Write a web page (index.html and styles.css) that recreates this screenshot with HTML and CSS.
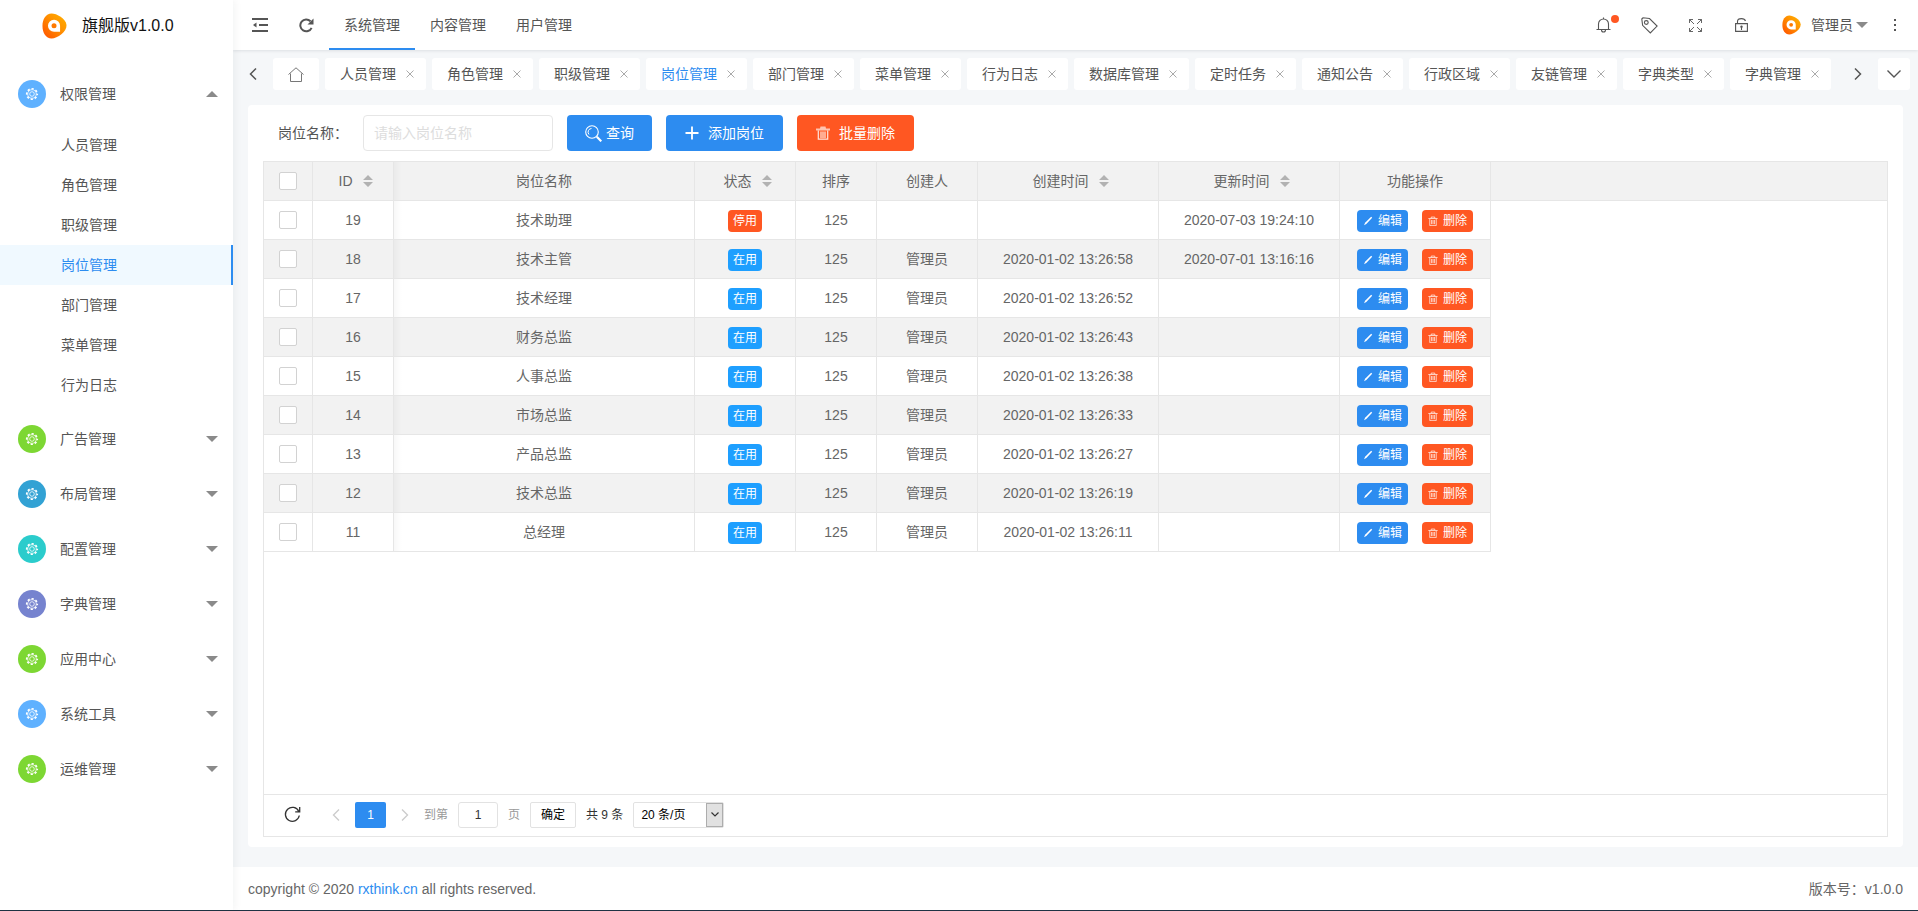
FILE: index.html
```
<!DOCTYPE html>
<html lang="zh-CN">
<head>
<meta charset="utf-8">
<title>岗位管理 - 旗舰版v1.0.0</title>
<link rel="stylesheet" href="styles.css">
</head>
<body>
<svg class="sprite" aria-hidden="true">
  <defs>
    <linearGradient id="flame" x1="0" y1="1" x2="1" y2="0">
      <stop offset="0.1" stop-color="#ff5a00"/>
      <stop offset="0.6" stop-color="#ff9500"/>
      <stop offset="1" stop-color="#ffb400"/>
    </linearGradient>
    <symbol id="logo" viewBox="0 0 26 26">
      <path fill="url(#flame)" d="M10 0C15 0 25 5 25.500 12C26 19 16 26 10 26C4 26 0.500 20 0.500 13C0.500 6 4 0 10 0Z"/>
      <path fill="#fff" d="M12.500 6.500a6.300 6.300 0 1 0 0 12.600h6.300v-6.300A6.300 6.300 0 0 0 12.500 6.500Z"/>
      <circle cx="12.500" cy="12.800" r="2.600" fill="#ff7a00"/>
    </symbol>
    <symbol id="gear" viewBox="-7 -7 14 14">
      <circle r="5.300" fill="none" stroke="currentColor" stroke-width="1.600" stroke-dasharray="2.200 1.963" stroke-dashoffset="1.100"/>
      <circle r="4.300" fill="none" stroke="currentColor" stroke-width=".8"/>
      <circle r="2.300" fill="none" stroke="currentColor" stroke-width=".8"/>
    </symbol>
    <symbol id="down" viewBox="0 0 12 6"><path fill="currentColor" d="M0 0h12L6 6z"/></symbol>
    <symbol id="close" viewBox="0 0 8 8"><path fill="none" stroke="currentColor" d="M.5.500l7 7M7.500.500l-7 7"/></symbol>
    <symbol id="sort" viewBox="0 0 10 12"><path fill="currentColor" d="M0 5L5 0l5 5zM0 7h10l-5 5z"/></symbol>
    <symbol id="trash" viewBox="0 0 14 14">
      <path fill="none" stroke="currentColor" d="M.5 3.500h13M4.500 3V1.500h5V3M2.500 4v9.500h9V4M5 5.500v6M7 5.500v6M9 5.500v6"/>
    </symbol>
    <symbol id="trash-solid" viewBox="0 0 14 14">
      <path fill="currentColor" opacity=".65" d="M0 2.500h4L4.500.500h5l.5 2h4v2H0z"/>
      <path fill="none" stroke="currentColor" stroke-width="1.200" opacity=".85" d="M2.300 4.500v8.700h9.400V4.500M5 5.500v6.500M7 5.500v6.500M9 5.500v6.500"/>
    </symbol>
    <symbol id="pen" viewBox="0 0 12 12"><path fill="currentColor" d="M9.800 1l1.200 1.200-7 7.500L1.200 11l1.300-2.800z"/></symbol>
  </defs>
</svg>
<div class="app">
  <aside class="sidebar">
    <div class="brand"><svg class="brand-logo"><use href="#logo"/></svg><span>旗舰版v1.0.0</span></div>
    <nav class="menu">
      <a class="group" href="#"><span class="badge sky"><svg><use href="#gear"/></svg></span>权限管理<svg class="caret up"><use href="#down"/></svg></a>
      <div class="submenu">
        <a href="#">人员管理</a>
        <a href="#">角色管理</a>
        <a href="#">职级管理</a>
        <a href="#" class="active">岗位管理</a>
        <a href="#">部门管理</a>
        <a href="#">菜单管理</a>
        <a href="#">行为日志</a>
      </div>
      <a class="group" href="#"><span class="badge green"><svg><use href="#gear"/></svg></span>广告管理<svg class="caret"><use href="#down"/></svg></a>
      <a class="group" href="#"><span class="badge blue"><svg><use href="#gear"/></svg></span>布局管理<svg class="caret"><use href="#down"/></svg></a>
      <a class="group" href="#"><span class="badge teal"><svg><use href="#gear"/></svg></span>配置管理<svg class="caret"><use href="#down"/></svg></a>
      <a class="group" href="#"><span class="badge violet"><svg><use href="#gear"/></svg></span>字典管理<svg class="caret"><use href="#down"/></svg></a>
      <a class="group" href="#"><span class="badge green"><svg><use href="#gear"/></svg></span>应用中心<svg class="caret"><use href="#down"/></svg></a>
      <a class="group" href="#"><span class="badge sky"><svg><use href="#gear"/></svg></span>系统工具<svg class="caret"><use href="#down"/></svg></a>
      <a class="group" href="#"><span class="badge green"><svg><use href="#gear"/></svg></span>运维管理<svg class="caret"><use href="#down"/></svg></a>
    </nav>
  </aside>

  <div class="main">
    <header class="topbar">
      <button class="tool" type="button" aria-label="收起菜单"><svg width="16" height="14" viewBox="0 0 16 14"><path fill="none" stroke="currentColor" stroke-width="2" d="M0 1h16M7 7h9M0 13h16"/><path fill="currentColor" d="M1 7l3.500-2.500v5z"/></svg></button>
      <button class="tool" type="button" aria-label="刷新"><svg width="15" height="15" viewBox="0 0 15 15"><path fill="none" stroke="currentColor" stroke-width="2" d="M12.600 9.800A5.900 5.900 0 1 1 11.500 3.300"/><path fill="currentColor" d="M14.500.500v6h-6z"/></svg></button>
      <nav class="modules">
        <a href="#" class="active">系统管理</a>
        <a href="#">内容管理</a>
        <a href="#">用户管理</a>
      </nav>
      <div class="actions">
        <button class="tool" type="button" aria-label="消息"><span class="bell"><svg width="15" height="16" viewBox="0 0 15 16"><path fill="none" stroke="currentColor" stroke-width="1.100" d="M.5 12.500h14M2.500 12.500V7a5 5 0 0 1 10 0v5.500M7.500 2V.5M5.500 13a2 2 0 0 0 4 0"/></svg><i class="dot"></i></span></button>
        <button class="tool" type="button" aria-label="标签"><svg width="17" height="17" viewBox="0 0 17 17"><path fill="none" stroke="currentColor" stroke-width="1.100" d="M.8 2L2 .8l6.500.7 7.600 7.600-6.800 6.800L1.600 8.300z"/><circle cx="5.300" cy="5.500" r="1.900" fill="none" stroke="currentColor" stroke-width="1.100"/></svg></button>
        <button class="tool" type="button" aria-label="全屏"><svg width="13" height="13" viewBox="0 0 13 13"><path fill="none" stroke="currentColor" stroke-width=".9" d="M.5 4V.5H4M.5.500L5 5M9 .5h3.500V4M12.500.500L8 5M.5 9v3.500H4M.5 12.500L5 8M9 12.500h3.500V9M12.500 12.500L8 8"/></svg></button>
        <button class="tool" type="button" aria-label="锁屏"><svg width="13" height="14" viewBox="0 0 13 14"><path fill="none" stroke="currentColor" stroke-width="1.100" d="M.6 5.600h11.800v7.800H.6zM2.500 5.500V3.500C2.500 1.500 4 .6 6.500.6S10 1.500 10.500 3M6.500 9.500V12"/><circle cx="6.500" cy="8.800" r="1.200" fill="currentColor"/></svg></button>
        <a class="user" href="#"><svg class="avatar"><use href="#logo"/></svg>管理员<svg class="caret"><use href="#down"/></svg></a>
        <button class="tool" type="button" aria-label="更多"><svg width="2" height="12" viewBox="0 0 2 12"><path fill="currentColor" d="M0 0h2v2H0zM0 5h2v2H0zM0 10h2v2H0z"/></svg></button>
      </div>
    </header>

    <div class="tabs">
      <button class="arrow left" type="button" aria-label="向左"><svg width="8" height="12" viewBox="0 0 8 12"><path fill="none" stroke="currentColor" stroke-width="1.500" d="M7 .5L1.500 6 7 11.500"/></svg></button>
      <div class="tab-list">
        <a class="tab home" href="#" aria-label="首页"><svg width="16" height="15" viewBox="0 0 16 15"><path fill="none" stroke="currentColor" d="M.5 7.500L8 .8l7.500 6.700M2.500 6.500v8h11v-8"/></svg></a>
        <a class="tab" href="#">人员管理<svg><use href="#close"/></svg></a>
        <a class="tab" href="#">角色管理<svg><use href="#close"/></svg></a>
        <a class="tab" href="#">职级管理<svg><use href="#close"/></svg></a>
        <a class="tab active" href="#">岗位管理<svg><use href="#close"/></svg></a>
        <a class="tab" href="#">部门管理<svg><use href="#close"/></svg></a>
        <a class="tab" href="#">菜单管理<svg><use href="#close"/></svg></a>
        <a class="tab" href="#">行为日志<svg><use href="#close"/></svg></a>
        <a class="tab" href="#">数据库管理<svg><use href="#close"/></svg></a>
        <a class="tab" href="#">定时任务<svg><use href="#close"/></svg></a>
        <a class="tab" href="#">通知公告<svg><use href="#close"/></svg></a>
        <a class="tab" href="#">行政区域<svg><use href="#close"/></svg></a>
        <a class="tab" href="#">友链管理<svg><use href="#close"/></svg></a>
        <a class="tab" href="#">字典类型<svg><use href="#close"/></svg></a>
        <a class="tab" href="#">字典管理<svg><use href="#close"/></svg></a>
      </div>
      <button class="arrow right" type="button" aria-label="向右"><svg width="8" height="12" viewBox="0 0 8 12"><path fill="none" stroke="currentColor" stroke-width="1.500" d="M1 .5L6.500 6 1 11.500"/></svg></button>
      <button class="more" type="button" aria-label="标签操作"><svg width="14" height="8" viewBox="0 0 14 8"><path fill="none" stroke="currentColor" stroke-width="1.400" d="M.5.500L7 7 13.500.500"/></svg></button>
    </div>

    <main class="card">
      <form class="filter">
        <label for="post-name">岗位名称：</label>
        <input id="post-name" type="text" placeholder="请输入岗位名称">
        <button class="btn primary" type="button"><svg width="17" height="17" viewBox="0 0 17 17"><circle cx="7" cy="7" r="6.300" fill="none" stroke="currentColor" stroke-width="1.100"/><path fill="none" stroke="currentColor" d="M6.500 3.500A3.600 3.600 0 0 0 4 9.500"/><path stroke="currentColor" stroke-width="2.200" d="M11.800 11.800l4.500 4.500"/></svg>查询</button>
        <button class="btn primary wide" type="button"><svg width="14" height="14" viewBox="0 0 14 14"><path stroke="currentColor" stroke-width="1.800" d="M7 .5v13M.5 7h13"/></svg>添加岗位</button>
        <button class="btn danger wide" type="button"><svg width="14" height="14"><use href="#trash-solid"/></svg>批量删除</button>
      </form>

      <section class="grid">
        <div class="grid-body">
          <table>
            <colgroup><col class="w-check"><col class="w-id"><col class="w-name"><col class="w-mid"><col class="w-id"><col class="w-mid"><col class="w-time"><col class="w-time"><col class="w-ops"><col></colgroup>
            <thead>
              <tr>
                <th><input type="checkbox" aria-label="全选"></th>
                <th class="sortable">ID<svg><use href="#sort"/></svg></th>
                <th>岗位名称</th>
                <th class="sortable">状态<svg><use href="#sort"/></svg></th>
                <th>排序</th>
                <th>创建人</th>
                <th class="sortable">创建时间<svg><use href="#sort"/></svg></th>
                <th class="sortable">更新时间<svg><use href="#sort"/></svg></th>
                <th>功能操作</th>
                <th class="filler"></th>
              </tr>
            </thead>
            <tbody>
              <tr><td><input type="checkbox" aria-label="选择 19"></td><td>19</td><td>技术助理</td><td><span class="state off">停用</span></td><td>125</td><td></td><td></td><td>2020-07-03 19:24:10</td><td><div class="ops"><button class="mini edit" type="button"><svg><use href="#pen"/></svg>编辑</button><button class="mini del" type="button"><svg><use href="#trash"/></svg>删除</button></div></td></tr>
              <tr><td><input type="checkbox" aria-label="选择 18"></td><td>18</td><td>技术主管</td><td><span class="state">在用</span></td><td>125</td><td>管理员</td><td>2020-01-02 13:26:58</td><td>2020-07-01 13:16:16</td><td><div class="ops"><button class="mini edit" type="button"><svg><use href="#pen"/></svg>编辑</button><button class="mini del" type="button"><svg><use href="#trash"/></svg>删除</button></div></td></tr>
              <tr><td><input type="checkbox" aria-label="选择 17"></td><td>17</td><td>技术经理</td><td><span class="state">在用</span></td><td>125</td><td>管理员</td><td>2020-01-02 13:26:52</td><td></td><td><div class="ops"><button class="mini edit" type="button"><svg><use href="#pen"/></svg>编辑</button><button class="mini del" type="button"><svg><use href="#trash"/></svg>删除</button></div></td></tr>
              <tr><td><input type="checkbox" aria-label="选择 16"></td><td>16</td><td>财务总监</td><td><span class="state">在用</span></td><td>125</td><td>管理员</td><td>2020-01-02 13:26:43</td><td></td><td><div class="ops"><button class="mini edit" type="button"><svg><use href="#pen"/></svg>编辑</button><button class="mini del" type="button"><svg><use href="#trash"/></svg>删除</button></div></td></tr>
              <tr><td><input type="checkbox" aria-label="选择 15"></td><td>15</td><td>人事总监</td><td><span class="state">在用</span></td><td>125</td><td>管理员</td><td>2020-01-02 13:26:38</td><td></td><td><div class="ops"><button class="mini edit" type="button"><svg><use href="#pen"/></svg>编辑</button><button class="mini del" type="button"><svg><use href="#trash"/></svg>删除</button></div></td></tr>
              <tr><td><input type="checkbox" aria-label="选择 14"></td><td>14</td><td>市场总监</td><td><span class="state">在用</span></td><td>125</td><td>管理员</td><td>2020-01-02 13:26:33</td><td></td><td><div class="ops"><button class="mini edit" type="button"><svg><use href="#pen"/></svg>编辑</button><button class="mini del" type="button"><svg><use href="#trash"/></svg>删除</button></div></td></tr>
              <tr><td><input type="checkbox" aria-label="选择 13"></td><td>13</td><td>产品总监</td><td><span class="state">在用</span></td><td>125</td><td>管理员</td><td>2020-01-02 13:26:27</td><td></td><td><div class="ops"><button class="mini edit" type="button"><svg><use href="#pen"/></svg>编辑</button><button class="mini del" type="button"><svg><use href="#trash"/></svg>删除</button></div></td></tr>
              <tr><td><input type="checkbox" aria-label="选择 12"></td><td>12</td><td>技术总监</td><td><span class="state">在用</span></td><td>125</td><td>管理员</td><td>2020-01-02 13:26:19</td><td></td><td><div class="ops"><button class="mini edit" type="button"><svg><use href="#pen"/></svg>编辑</button><button class="mini del" type="button"><svg><use href="#trash"/></svg>删除</button></div></td></tr>
              <tr><td><input type="checkbox" aria-label="选择 11"></td><td>11</td><td>总经理</td><td><span class="state">在用</span></td><td>125</td><td>管理员</td><td>2020-01-02 13:26:11</td><td></td><td><div class="ops"><button class="mini edit" type="button"><svg><use href="#pen"/></svg>编辑</button><button class="mini del" type="button"><svg><use href="#trash"/></svg>删除</button></div></td></tr>
            </tbody>
          </table>
        </div>
        <div class="pager">
          <button class="icon reload" type="button" aria-label="刷新表格"><svg width="17" height="17" viewBox="0 0 17 17"><path fill="none" stroke="currentColor" stroke-width="1.300" d="M15.300 9.500A7 7 0 1 1 14.800 5.500M15.700 1v4.800h-4.500"/></svg></button>
          <button class="icon faint" type="button" aria-label="上一页"><svg width="8" height="12" viewBox="0 0 8 12"><path fill="none" stroke="currentColor" stroke-width="1.400" d="M7 .5L1.500 6 7 11.500"/></svg></button>
          <button class="current" type="button">1</button>
          <button class="icon faint" type="button" aria-label="下一页"><svg width="8" height="12" viewBox="0 0 8 12"><path fill="none" stroke="currentColor" stroke-width="1.400" d="M1 .5L6.500 6 1 11.500"/></svg></button>
          <label class="muted" for="page-no">到第</label>
          <input id="page-no" type="text" value="1">
          <span class="muted">页</span>
          <button class="go" type="button">确定</button>
          <span class="total">共 9 条</span>
          <span class="size"><select aria-label="每页条数"><option>20 条/页</option></select><span class="size-arrow"><svg width="8" height="5" viewBox="0 0 8 5"><path fill="none" stroke="currentColor" stroke-width="1.200" d="M.5.500L4 4 7.500.500"/></svg></span></span>
        </div>
      </section>
    </main>

    <footer class="footer">
      <span>copyright © 2020 <a href="#">rxthink.cn</a> all rights reserved.</span>
      <span>版本号：v1.0.0</span>
    </footer>
  </div>
</div>
</body>
</html>
```
FILE: styles.css
```
* {
  box-sizing: border-box;
}

body {
  margin: 0;
  color: #555;
  background: #f5f7f9;
  font: 14px/20px "Liberation Sans", "Noto Sans CJK SC", sans-serif;
}

a {
  color: inherit;
  text-decoration: none;
}

button,
input,
select {
  margin: 0;
  padding: 0;
  border: 0;
  color: inherit;
  background: none;
  font: inherit;
}

svg {
  flex: none;
}

.sprite {
  position: absolute;
  width: 0;
  height: 0;
}

.app {
  display: flex;
  min-height: 100vh;
  border-bottom: 1px solid #1f3344;
}

/* Sidebar */
.sidebar {
  z-index: 1;
  flex: none;
  width: 233px;
  background: #fff;
  box-shadow: 2px 0 8px rgba(29, 35, 41, 0.05);
}

.brand {
  display: flex;
  align-items: center;
  gap: 15px;
  height: 52px;
  padding-left: 42px;
  color: #111;
  font-size: 16px;
}

.brand-logo {
  width: 25px;
  height: 26px;
}

.menu {
  padding-top: 14px;
}

.group {
  display: flex;
  align-items: center;
  height: 55px;
  padding: 0 15px 0 18px;
}

.badge {
  display: flex;
  align-items: center;
  justify-content: center;
  width: 28px;
  height: 28px;
  margin-right: 14px;
  border-radius: 50%;
  color: #fff;
}

.badge svg {
  width: 14px;
  height: 14px;
}

.sky { background: #5fb1ff; }
.green { background: #7dd733; }
.blue { background: #32a2d4; }
.teal { background: #2bcccc; }
.violet { background: #7683cf; }

.caret {
  width: 12px;
  height: 6px;
  margin-left: auto;
  color: #8a8a8a;
}

.caret.up {
  transform: rotate(180deg);
}

.submenu {
  padding: 4px 0 6px;
}

.submenu a {
  display: block;
  padding-left: 61px;
  line-height: 40px;
}

.submenu .active {
  border-right: 2px solid #2d8cf0;
  color: #2d8cf0;
  background: #f0f9ff;
}

/* Top bar */
.main {
  display: flex;
  flex: 1;
  flex-direction: column;
  min-width: 0;
}

.topbar {
  display: flex;
  height: 50px;
  padding-left: 4px;
  background: #fff;
  box-shadow: 0 1px 3px rgba(0, 21, 41, 0.1);
}

.tool {
  display: flex;
  align-items: center;
  justify-content: center;
  width: 46px;
}

.modules {
  display: flex;
}

.modules a {
  padding: 0 15px;
  line-height: 50px;
}

.modules .active {
  border-bottom: 2px solid #2d8cf0;
}

.actions {
  display: flex;
  margin-left: auto;
}

.bell {
  position: relative;
  display: flex;
}

.dot {
  position: absolute;
  top: -2px;
  right: -8px;
  width: 8px;
  height: 8px;
  border-radius: 50%;
  background: #ff5722;
}

.user {
  display: flex;
  align-items: center;
  padding: 0 4px 0 18px;
}

.avatar {
  width: 19px;
  height: 20px;
  margin-right: 10px;
}

.user .caret {
  margin-left: 3px;
}

/* Open page tabs */
.tabs {
  display: flex;
  align-items: center;
  padding: 8px 8px 15px 0;
}

.arrow {
  display: flex;
  align-items: center;
  justify-content: center;
  width: 40px;
  height: 32px;
}

.tab-list {
  display: flex;
  flex: 1;
  gap: 6px;
  min-width: 0;
  overflow: hidden;
}

.tab {
  display: flex;
  flex: none;
  align-items: center;
  height: 32px;
  padding: 0 12px 0 15px;
  border-radius: 3px;
  background: #fff;
}

.tab svg {
  width: 8px;
  height: 8px;
  margin-left: 10px;
  color: #aaa;
}

.tab.home svg {
  width: 16px;
  height: 15px;
  margin: 0;
  color: #777;
}

.tab.home {
  padding: 0 15px;
}

.tab.active {
  color: #2d8cf0;
}

.more {
  display: flex;
  align-items: center;
  justify-content: center;
  width: 32px;
  height: 32px;
  border-radius: 3px;
  background: #fff;
}

/* Content card */
.card {
  display: flex;
  flex: 1;
  flex-direction: column;
  margin: 0 15px 20px;
  padding: 10px 15px;
  border-radius: 4px;
  background: #fff;
}

.filter {
  display: flex;
  align-items: center;
  gap: 14px;
  padding-left: 15px;
}

.filter label {
  width: 71px;
}

.filter input {
  width: 190px;
  height: 36px;
  padding: 0 10px;
  border: 1px solid #e6e6e6;
  border-radius: 4px;
}

.filter input::placeholder {
  color: #ddd;
}

.btn {
  display: flex;
  align-items: center;
  justify-content: center;
  gap: 4px;
  height: 36px;
  padding: 0 18px;
  border-radius: 4px;
  color: #fff;
}

.btn.wide {
  gap: 9px;
  padding: 0 19px;
}

.primary { background: #2d8cf0; }
.danger { background: #ff5722; }

.grid {
  display: flex;
  flex: 1;
  flex-direction: column;
  margin-top: 10px;
  border: 1px solid #e6e6e6;
  color: #666;
}

.grid-body {
  flex: 1;
}

table {
  width: 100%;
  border-spacing: 0;
  table-layout: fixed;
}

.w-check { width: 49px; }
.w-id { width: 81px; }
.w-name { width: 301px; }
.w-mid { width: 101px; }
.w-time { width: 181px; }
.w-ops { width: 151px; }

th,
td {
  height: 39px;
  padding: 0;
  border-right: 1px solid #e6e6e6;
  border-bottom: 1px solid #e6e6e6;
  font-weight: 400;
  text-align: center;
  vertical-align: middle;
}

th,
tbody tr:nth-child(even) td {
  background-color: #f2f2f2;
}

th:nth-child(3),
td:nth-child(3) {
  background-image: linear-gradient(to right, rgba(0, 0, 0, 0.03), transparent 8px);
  background-repeat: no-repeat;
}

.filler {
  border-right: 0;
}

.sortable {
  padding-left: 5px;
}

.sortable svg {
  width: 10px;
  height: 12px;
  margin-left: 10px;
  color: #b2b2b2;
  vertical-align: -1px;
}

input[type="checkbox"] {
  display: block;
  width: 18px;
  height: 18px;
  margin: 0 auto;
  border: 1px solid #d2d2d2;
  border-radius: 2px;
  background: #fff;
  appearance: none;
}

td:nth-child(4),
td:nth-child(9) {
  padding-top: 1px;
}

.state {
  display: block;
  width: 34px;
  margin: 0 auto;
  border-radius: 4px;
  color: #fff;
  background: #1e9fff;
  font-size: 12px;
  line-height: 22px;
}

.state.off {
  background: #ff5722;
}

.ops {
  display: flex;
  justify-content: center;
  gap: 14px;
}

.mini {
  display: flex;
  align-items: center;
  justify-content: center;
  gap: 5px;
  width: 51px;
  height: 22px;
  border-radius: 4px;
  color: #fff;
  font-size: 12px;
}

.mini svg {
  width: 10px;
  height: 10px;
}

.edit { background: #2d8cf0; }
.del { background: #ff5722; }

/* Pager */
.pager {
  display: flex;
  align-items: center;
  gap: 10px;
  height: 42px;
  padding: 0 11px 2px;
  border-top: 1px solid #e6e6e6;
  color: #333;
  font-size: 12px;
}

.icon {
  display: flex;
  align-items: center;
  justify-content: center;
  width: 18px;
  height: 26px;
}

.reload {
  width: 34px;
  margin-right: 8px;
}

.faint {
  color: #ccc;
}

.current {
  width: 31px;
  height: 26px;
  border-radius: 2px;
  color: #fff;
  background: #2d8cf0;
}

.muted {
  color: #999;
}

.pager input {
  width: 40px;
  height: 26px;
  border: 1px solid #e2e2e2;
  border-radius: 3px;
  text-align: center;
}

.go {
  width: 46px;
  height: 26px;
  border: 1px solid #e2e2e2;
  border-radius: 2px;
  color: #000;
}

.size {
  display: flex;
  width: 91px;
  height: 26px;
  border: 1px solid #e2e2e2;
  border-radius: 2px;
  color: #000;
}

.size select {
  flex: 1;
  min-width: 0;
  padding-left: 7px;
  appearance: none;
}

.size-arrow {
  display: flex;
  align-items: center;
  justify-content: center;
  width: 17px;
  border: 1px solid #adadad;
  color: #333;
  background: #e1e1e1;
}

/* Footer */
.footer {
  display: flex;
  align-items: center;
  justify-content: space-between;
  height: 43px;
  padding: 0 15px;
  color: #666;
  background: #fff;
}

.footer a {
  color: #2d8cf0;
}
```
